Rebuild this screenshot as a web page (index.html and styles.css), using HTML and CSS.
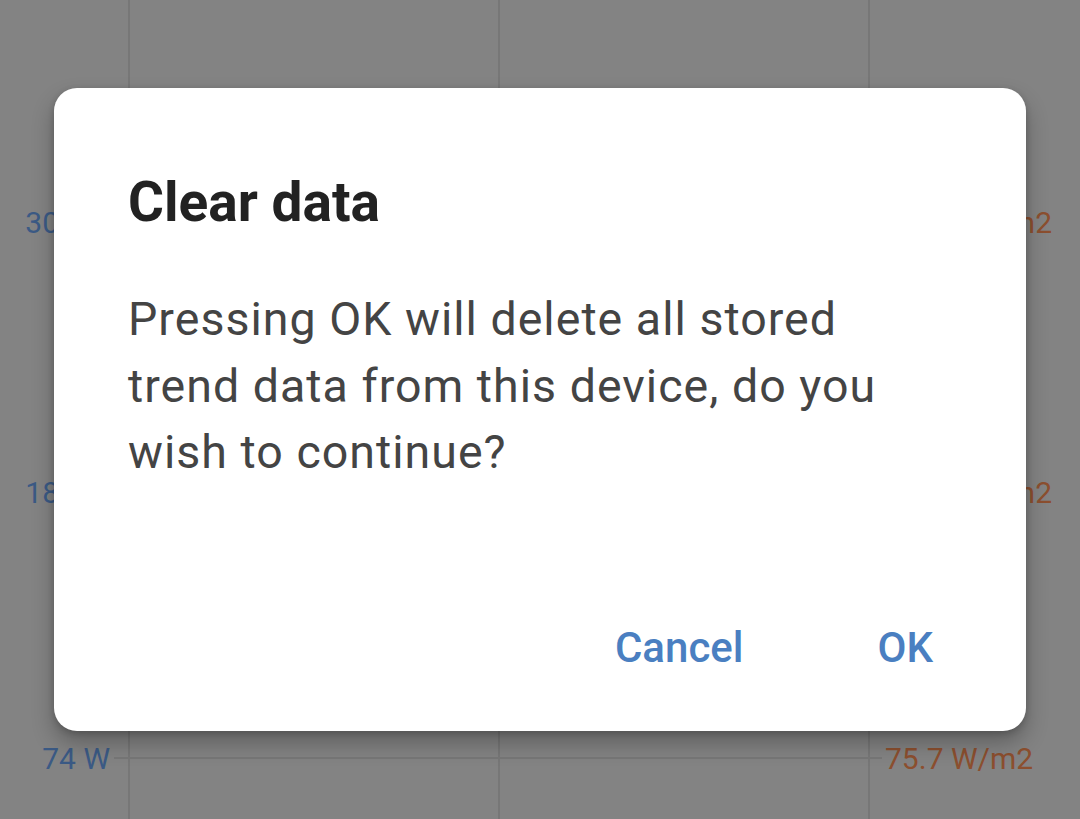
FILE: index.html
```html
<!DOCTYPE html>
<html lang="en">
<head>
<meta charset="utf-8">
<title>Clear data</title>
<link rel="stylesheet" href="styles.css">
</head>
<body>
<div class="chart">
  <svg class="grid" width="1080" height="819" viewBox="0 0 1080 819">
    <line x1="129" y1="0" x2="129" y2="819"/>
    <line x1="499" y1="0" x2="499" y2="819"/>
    <line x1="869" y1="0" x2="869" y2="819"/>
    <line x1="114" y1="222" x2="882" y2="222"/>
    <line x1="114" y1="493" x2="882" y2="493"/>
    <line x1="114" y1="758" x2="882" y2="758"/>
  </svg>
  <div class="label left" style="top:206px">302 W</div>
  <div class="label left" style="top:476px">188 W</div>
  <div class="label left" style="top:742px">74 W</div>
  <div class="label right" style="top:206px">302.8 W/m2</div>
  <div class="label right" style="top:476px">189.3 W/m2</div>
  <div class="label right short" style="top:742px">75.7 W/m2</div>
</div>
<div class="scrim">
  <div class="dialog">
    <h1 class="title">Clear data</h1>
    <p class="message">Pressing OK will delete all stored trend data from this device, do you wish to continue?</p>
    <div class="actions">
      <button class="btn">Cancel</button>
      <button class="btn">OK</button>
    </div>
  </div>
</div>
</body>
</html>
```
FILE: styles.css
```css
html, body {
  margin: 0;
  padding: 0;
  width: 1080px;
  height: 819px;
  overflow: hidden;
}
body {
  background: #838383;
  font-family: Roboto, "Noto Sans", sans-serif;
  position: relative;
}
.chart {
  position: absolute;
  inset: 0;
}
.grid {
  position: absolute;
  left: 0;
  top: 0;
}
.grid line {
  stroke: #777777;
  stroke-width: 2;
}
.label {
  position: absolute;
  font-size: 30px;
  line-height: 34px;
  white-space: nowrap;
}
.label.left {
  right: 970px;
  color: #3b5a85;
}
.label.right {
  right: 28px;
  color: #8c4f2f;
}
.label.right.short {
  right: auto;
  left: 885px;
}
.scrim {
  position: absolute;
  inset: 0;
  display: flex;
  align-items: center;
  justify-content: center;
}
.dialog {
  width: 972px;
  box-sizing: border-box;
  background: #ffffff;
  border-radius: 23px;
  padding: 81px 0 58px 0;
  box-shadow: 0 12px 22px rgba(0, 0, 0, 0.28), 0 2px 6px rgba(0, 0, 0, 0.18);
  display: flex;
  flex-direction: column;
}
.title {
  margin: 0;
  padding: 0 72px 0 74px;
  font-size: 55px;
  line-height: 66px;
  font-weight: 700;
  color: #222222;
}
.message {
  margin: 51px 0 0 0;
  padding: 0 72px 0 74px;
  font-size: 46.5px;
  line-height: 66.5px;
  letter-spacing: 0.022em;
  color: #444444;
}
.actions {
  margin-top: 137px;
  display: flex;
  justify-content: flex-end;
  gap: 134px;
  padding-right: 93px;
}
.btn {
  border: none;
  background: none;
  padding: 0;
  margin: 0;
  font-family: Roboto, "Noto Sans", sans-serif;
  font-size: 42px;
  line-height: 50px;
  font-weight: 500;
  color: #4a7fc1;
}
```
